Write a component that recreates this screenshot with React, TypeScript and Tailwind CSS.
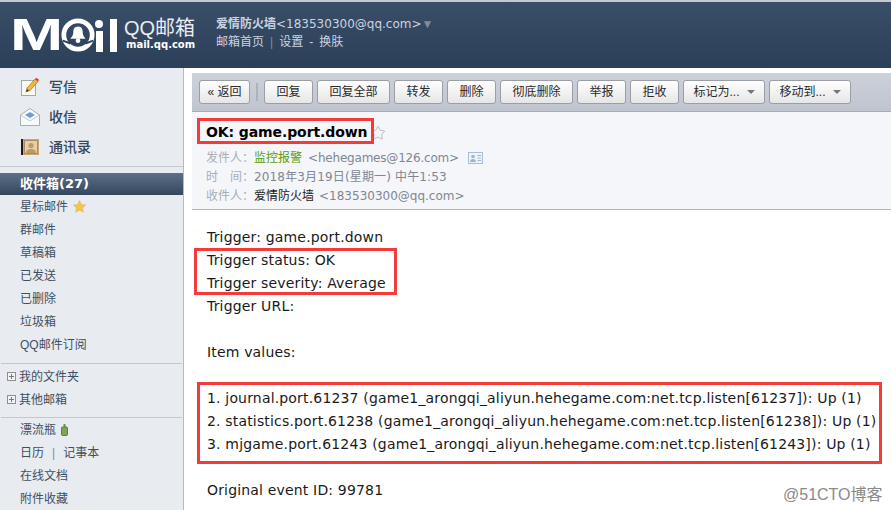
import { Star } from 'lucide-react';

const CJK = "font-['Liberation_Sans','Noto_Sans_CJK_SC',sans-serif]";
const BODY = "font-['DejaVu_Sans','Noto_Sans_CJK_SC',sans-serif]";

function Logo() {
    return (
        <div className="flex h-[34px] items-center text-white">
            <span className="-ml-[3px] w-[51px] origin-left scale-x-[1.45] font-['Liberation_Sans',sans-serif] text-[44px] leading-none font-bold">M</span>
            <svg width="34" height="34" viewBox="0 0 36 36">
                <circle cx="18" cy="18" r="15" fill="none" stroke="#fff" strokeWidth="5" />
                <path d="M18 9c-4 0-5 3-5 6 0 4-2 5-3 7h16c-1-2-3-3-3-7 0-3-1-6-5-6z" fill="#fff" />
                <circle cx="18" cy="24" r="2.5" fill="#fff" />
                <path d="M2 24l8 3M34 24l-8 3" stroke="#2f435d" strokeWidth="2" />
            </svg>
            <div className="flex items-end gap-[7px]">
                <div className="flex flex-col items-center gap-[3px]">
                    <div className="h-[8px] w-[8px] rounded-full bg-white" />
                    <div className="h-[21px] w-[7px] bg-white" />
                </div>
                <div className="h-[33px] w-[7px] bg-white" />
            </div>
            <div className="ml-[7px] flex w-[71px] flex-col">
                <span className={`${CJK} text-[20px] leading-[20px] whitespace-nowrap text-[#e8edf3]`}>QQ邮箱</span>
                <span className="ml-[2px] font-['DejaVu_Sans',sans-serif] text-[10px] leading-[14px] font-bold text-white">mail.qq.com</span>
            </div>
        </div>
    );
}

function WriteIcon() {
    return (
        <svg width="20" height="20" viewBox="0 0 20 20">
            <rect x="1.5" y="3.5" width="14" height="15" fill="#fbfbf8" stroke="#a8a8a0" />
            <path d="M6 15l1-4 8-9 3 2.500-8 9z" fill="#f4b73c" stroke="#a8701c" strokeWidth="0.7" />
            <path d="M15 2l1.500-1.200 2.500 2-1 1.800z" fill="#d9442c" />
            <path d="M6 15l1-3 2 1.500z" fill="#403020" />
        </svg>
    );
}

function InboxIcon() {
    return (
        <svg width="20" height="18" viewBox="0 0 20 18">
            <path d="M0.500 7L10 0.500 19.500 7V17.500H0.500z" fill="#f8f9fb" stroke="#a9adb5" />
            <path d="M5 7l5-3 5 3-5 3z" fill="#6f9fd8" />
            <path d="M0.500 7l9.500 6 9.500-6" fill="none" stroke="#c4c8d0" />
        </svg>
    );
}

function ContactsIcon() {
    return (
        <svg width="18" height="18" viewBox="0 0 18 18">
            <rect x="0" y="1" width="18" height="16" fill="#c9a878" />
            <rect x="0" y="1" width="2" height="16" fill="#1f1a14" />
            <rect x="3.500" y="2.500" width="13" height="13" fill="#e4cfa8" stroke="#a98c5e" />
            <circle cx="10" cy="7.500" r="2.600" fill="#c09a64" />
            <path d="M5 15c0-3 2-4 5-4s5 1 5 4z" fill="#c09a64" />
        </svg>
    );
}

function CardIcon() {
    return (
        <svg width="15" height="12" viewBox="0 0 15 12">
            <rect x="0.500" y="0.500" width="14" height="11" fill="#eef3f9" stroke="#a9bdd6" />
            <circle cx="5" cy="4.500" r="1.800" fill="#9db5d2" />
            <path d="M2 10c0-2 1.500-3 3-3s3 1 3 3z" fill="#9db5d2" />
            <path d="M9.500 3.500h3.500M9.500 6h3.500M9.500 8.500h3.500" stroke="#9db5d2" />
        </svg>
    );
}

function SmallStar() {
    return (
        <svg width="13" height="13" viewBox="0 0 24 24" className="ml-[5px]">
            <path d="M12 1l3.400 7.400 8 .9-6 5.400 1.700 8L12 18.700 4.900 22.700l1.700-8-6-5.400 8-.9z" fill="#f5c44c" stroke="#e2b05a" />
        </svg>
    );
}

function Bottle() {
    return (
        <svg width="7" height="12" viewBox="0 0 7 12" className="ml-[5px]">
            <rect x="2.500" y="0" width="2" height="3" fill="#6d8f4a" />
            <rect x="0.500" y="3" width="6" height="8.500" rx="1" fill="#7ba65a" stroke="#5a7f42" />
        </svg>
    );
}

function Plus() {
    return (
        <span className="relative mr-[3px] ml-[7px] h-[9px] w-[9px] shrink-0 border border-[#8f8f8f] bg-[#f2f3f6]">
            <span className="absolute top-[3px] left-[1px] h-px w-[5px] bg-[#777]" />
            <span className="absolute top-[1px] left-[3px] h-[5px] w-px bg-[#777]" />
        </span>
    );
}

function NavRow({ children }: { children: React.ReactNode }) {
    return <div className="flex h-[23px] items-center pl-[20px] text-[12px] text-[#3f4f62]">{children}</div>;
}

function Sidebar() {
    return (
        <aside className={`${CJK} h-[442px] w-[184px] shrink-0 overflow-hidden border-r border-[#b4b9c4] bg-[#e8ebf0]`}>
            <div className="flex h-[99px] flex-col border-b border-[#c4c8d0] pt-[4px]">
                {[
                    { icon: <WriteIcon />, label: '写信' },
                    { icon: <InboxIcon />, label: '收信' },
                    { icon: <ContactsIcon />, label: '通讯录' },
                ].map(({ icon, label }) => (
                    <div key={label} className="flex h-[30px] items-center">
                        <span className="flex w-[49px] justify-center pl-[10px]">{icon}</span>
                        <span className="text-[14px] font-medium text-[#37465a]">{label}</span>
                    </div>
                ))}
            </div>
            <div className={`${BODY} mt-[6px] flex h-[22px] items-center bg-gradient-to-b from-[#5e7088] to-[#34475f] pl-[20px] text-[13px] font-bold text-white`}>
                收件箱(27)
            </div>
            <NavRow>星标邮件<SmallStar /></NavRow>
            <NavRow>群邮件</NavRow>
            <NavRow>草稿箱</NavRow>
            <NavRow>已发送</NavRow>
            <NavRow>已删除</NavRow>
            <NavRow>垃圾箱</NavRow>
            <NavRow>QQ邮件订阅</NavRow>
            <div className="mx-[1px] mt-[7px] border-t border-[#c0c8d6]" />
            <div className="mt-[1px] flex h-[23px] items-center text-[12px] text-[#3f4f62]"><Plus />我的文件夹</div>
            <div className="flex h-[23px] items-center text-[12px] text-[#3f4f62]"><Plus />其他邮箱</div>
            <div className="mx-[1px] mt-[6px] border-t border-[#c0c8d6]" />
            <div>
                <NavRow>漂流瓶<Bottle /></NavRow>
                <NavRow>日历<span className="mx-[8px] text-[#7f8da0]">|</span>记事本</NavRow>
                <NavRow>在线文档</NavRow>
                <NavRow>附件收藏</NavRow>
            </div>
        </aside>
    );
}

function ToolButton({ label, width, menu }: { label: string; width: number; menu?: boolean }) {
    return (
        <button
            style={{ width }}
            className="flex h-[24px] shrink-0 items-center justify-center rounded-[3px] border border-[#9a9ea6] bg-gradient-to-b from-white to-[#e6e6e6] text-[12px] text-[#2a2a2a]"
        >
            {label}
            {menu && <span className="ml-[7px] h-0 w-0 border-x-[4px] border-t-[4px] border-x-transparent border-t-[#777]" />}
        </button>
    );
}

function Toolbar() {
    return (
        <div className={`${CJK} flex h-[39px] items-center gap-[4px] border-b border-[#a8acb4] bg-gradient-to-b from-[#cdd1da] to-[#bfc4cf] pl-[7px]`}>
            <ToolButton label="« 返回" width={51} />
            <div className="mx-[2px] h-[18px] w-[2px] bg-[#aeb2ba]" />
            <ToolButton label="回复" width={49} />
            <ToolButton label="回复全部" width={73} />
            <ToolButton label="转发" width={49} />
            <ToolButton label="删除" width={49} />
            <ToolButton label="彻底删除" width={73} />
            <ToolButton label="举报" width={49} />
            <ToolButton label="拒收" width={49} />
            <ToolButton label="标记为..." width={82} menu />
            <ToolButton label="移动到..." width={82} menu />
        </div>
    );
}

function MailHead() {
    return (
        <div className={`${BODY} h-[98px] border-b border-[#b0b4bc] bg-[#f5f6f9] pl-[14px]`}>
            <div className="flex h-[25px] items-center pt-[16px] text-[14px] font-bold text-black">
                <span className="tracking-[-0.1px]">OK: game.port.down</span>
                <Star size={16} strokeWidth={1.2} className="ml-[3px] text-[#aab0ba]" />
            </div>
            <div className="mt-[11px] flex h-[19px] items-center text-[12px] text-[#6f7784]">
                <span className="text-[#a8adb6]">发件人：</span>
                <span className="text-[#5a9a10]">监控报警</span>
                <span className="ml-[6px] tracking-[-0.2px] text-[#7f8794]">&lt;hehegames@126.com&gt;</span>
                <span className="ml-[9px]"><CardIcon /></span>
            </div>
            <div className="flex h-[19px] items-center text-[12px] text-[#7f8794]">
                <span className="w-[48px] text-[#a8adb6]">时　间：</span>
                <span className="tracking-[0.15px]">2018年3月19日(星期一) 中午1:53</span>
            </div>
            <div className="flex h-[19px] items-center text-[12px] text-[#7f8794]">
                <span className="text-[#a8adb6]">收件人：</span>
                <span className="text-[#222]">爱情防火墙</span>
                <span className="ml-[5px]">&lt;183530300@qq.com&gt;</span>
            </div>
        </div>
    );
}

const bodyLines = [
    'Trigger: game.port.down',
    'Trigger status: OK',
    'Trigger severity: Average',
    'Trigger URL:',
    '',
    'Item values:',
    '',
    '1. journal.port.61237 (game1_arongqi_aliyun.hehegame.com:net.tcp.listen[61237]): Up (1)',
    '2. statistics.port.61238 (game1_arongqi_aliyun.hehegame.com:net.tcp.listen[61238]): Up (1)',
    '3. mjgame.port.61243 (game1_arongqi_aliyun.hehegame.com:net.tcp.listen[61243]): Up (1)',
    '',
    'Original event ID: 99781',
];

export default function App() {
    return (
        <div className="relative h-[510px] w-[891px] overflow-hidden bg-white">
            <header className="flex h-[68px] items-center border-t-2 border-[#c4c8cc] bg-gradient-to-b from-[#3a4e68] to-[#2c3f58] pl-[13px]">
                <Logo />
                <div className={`${CJK} -mt-[4px] ml-[21px] text-[12px] text-[#c8d4e2]`}>
                    <div className="flex h-[18px] items-center">
                        <span className="font-bold">爱情防火墙</span>
                        <span className="font-['DejaVu_Sans',sans-serif]">&lt;183530300@qq.com&gt;</span>
                        <span className="text-[#7f8ca0]">▼</span>
                    </div>
                    <div className="flex h-[18px] items-center">邮箱首页<span className="mx-[6px] text-[#7f8ca0]">|</span>设置<span className="mx-[6px]">-</span>换肤</div>
                </div>
            </header>
            <div className="flex">
                <Sidebar />
                <main className="ml-[8px] min-w-0 flex-1 pt-[5px]">
                    <Toolbar />
                    <MailHead />
                    <div className={`${BODY} pt-[16px] pl-[15px] text-[14px] leading-[23px] tracking-[0.17px] whitespace-nowrap text-[#1a1a1a]`}>
                        {bodyLines.map((line, i) => (
                            <div key={i} className="h-[23px]">{line}</div>
                        ))}
                    </div>
                </main>
            </div>

            {/* red annotation boxes */}
            <div className="pointer-events-none absolute top-[118px] left-[197px] h-[26px] w-[177px] border-[3px] border-[#f53a3a]" />
            <div className="pointer-events-none absolute top-[248px] left-[194px] h-[47px] w-[203px] border-[3px] border-[#f53a3a]" />
            <div className="pointer-events-none absolute top-[382px] left-[197px] h-[82px] w-[685px] border-[3px] border-[#f53a3a]" />
            <div className={`${CJK} absolute top-[483px] left-[783px] text-[16px] text-[#8a8a8a]`}>@51CTO博客</div>
        </div>
    );
}
